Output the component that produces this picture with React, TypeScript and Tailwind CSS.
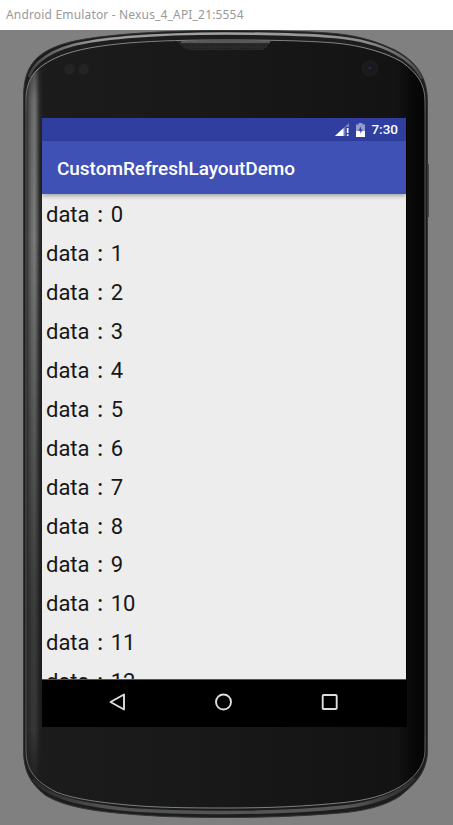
import React from "react";

const rows = Array.from({ length: 13 }, (_, i) => i);

const OUTER =
  "M23.5 98C23.5 78 28 67 37 58C54 43 78 38.5 128 34C160 31.5 190 30.5 225 30.5C265 30.5 305 31 335 33.5C362 36 380 43 395 50C415 61 427.5 75 427.5 102V750C427.5 772 415 784 400 796C388 804 371 810 344 812.7C304 816 270 817.5 225 817.5C185 817.5 155 816.5 128 814C90 811 63 806 45 795C30 783 23.5 771 23.5 750Z";
const INNER =
  "M26 100C26 86 30 77 37 70C54 55 78 47.5 128 43C145 41.5 160 41 176 41L182 46Q185 50 190 50H261Q266 50 269 44L272 41C297 41 317 41.5 335 43C362 45.5 387 53 402 62C418 74 425 84 425 102V750C425 766 414 778 400 786.7C386 795 369 800 344 802.5C304 806.5 270 808 225 808C185 808 155 807.5 128 805C95 802 70 798 55 791.5C35 781 26 770 26 750Z";
const RIM =
  "M26 100C26 86 30 77 37 70C54 55 78 47.5 128 43C160 40.5 190 40 225 40C265 40 305 40.5 335 43C362 45.5 387 53 402 62C418 74 425 84 425 102V750C425 766 414 778 400 786.7C386 795 369 800 344 802.5C304 806.5 270 808 225 808C185 808 155 807.5 128 805C95 802 70 798 55 791.5C35 781 26 770 26 750Z";

function DeviceFrame() {
  return (
    <svg
      className="absolute left-0 top-[-30px] h-[825px] w-[453px]"
      viewBox="0 0 453 825"
      fill="none"
      aria-hidden="true"
    >
      <defs>
        <linearGradient id="face" gradientUnits="userSpaceOnUse" x1="26" y1="0" x2="425" y2="0">
          <stop offset="0" stopColor="#1c1c1c" />
          <stop offset="0.5" stopColor="#181818" />
          <stop offset="0.93" stopColor="#131313" />
          <stop offset="0.97" stopColor="#080808" />
          <stop offset="1" stopColor="#050505" />
        </linearGradient>
        <linearGradient id="side" gradientUnits="userSpaceOnUse" x1="26" y1="0" x2="43" y2="0">
          <stop offset="0" stopColor="#202020" />
          <stop offset="0.12" stopColor="#484848" />
          <stop offset="0.3" stopColor="#686868" />
          <stop offset="0.5" stopColor="#7a7c7a" />
          <stop offset="0.65" stopColor="#5a5a5a" />
          <stop offset="0.78" stopColor="#303030" />
          <stop offset="1" stopColor="#202020" stopOpacity="0.4" />
        </linearGradient>
        <linearGradient id="fade" gradientUnits="userSpaceOnUse" x1="0" y1="55" x2="0" y2="790">
          <stop offset="0" stopColor="#fff" stopOpacity="0.35" />
          <stop offset="0.06" stopColor="#fff" stopOpacity="0.9" />
          <stop offset="0.25" stopColor="#fff" />
          <stop offset="0.5" stopColor="#fff" stopOpacity="0.65" />
          <stop offset="0.75" stopColor="#fff" stopOpacity="0.35" />
          <stop offset="0.92" stopColor="#fff" stopOpacity="0.28" />
          <stop offset="1" stopColor="#fff" stopOpacity="0" />
        </linearGradient>
        <linearGradient id="metal" gradientUnits="userSpaceOnUse" x1="23" y1="0" x2="428" y2="0">
          <stop offset="0" stopColor="#333" />
          <stop offset="0.06" stopColor="#606060" />
          <stop offset="0.18" stopColor="#989898" />
          <stop offset="0.5" stopColor="#a4a4a4" />
          <stop offset="0.85" stopColor="#8c8c8c" />
          <stop offset="0.95" stopColor="#606060" />
          <stop offset="1" stopColor="#333" />
        </linearGradient>
        <linearGradient id="lower" gradientUnits="userSpaceOnUse" x1="23" y1="0" x2="428" y2="0">
          <stop offset="0" stopColor="#222" />
          <stop offset="0.2" stopColor="#505353" />
          <stop offset="0.8" stopColor="#555858" />
          <stop offset="1" stopColor="#222" />
        </linearGradient>
        <linearGradient id="rim" gradientUnits="userSpaceOnUse" x1="0" y1="40" x2="0" y2="808">
          <stop offset="0" stopColor="#808080" />
          <stop offset="0.04" stopColor="#909090" />
          <stop offset="0.1" stopColor="#585858" />
          <stop offset="0.9" stopColor="#585858" />
          <stop offset="1" stopColor="#808080" />
        </linearGradient>
        <mask id="sideMask">
          <rect x="20" y="50" width="30" height="750" fill="url(#fade)" />
        </mask>
        <clipPath id="innerClip">
          <path d={INNER} />
        </clipPath>
        <pattern id="mesh" width="3" height="3" patternUnits="userSpaceOnUse">
          <rect width="3" height="3" fill="#292929" />
          <rect width="1" height="1" fill="#191919" />
        </pattern>
      </defs>

      <path d={OUTER} fill="#1d1d1d" />
      <path d={OUTER} stroke="#343434" strokeWidth="1" />
      {/* polished band around the top shoulder */}
      <path
        d="M29 77C32 69 35 65 40 61C57 46.5 80 41.5 128 37C160 34.5 190 33.5 225 33.5C265 33.5 305 34.5 335 37C362 39.5 380 45 395 53C410 61 418 70 422 79"
        stroke="url(#metal)"
        strokeWidth="2.6"
      />
      {/* lower shoulder */}
      <path
        d="M33 779C46 796 75 804 128 809.5C155 811.5 185 812.5 225 812.5C270 812.5 304 811 344 807C380 803 401 793 415 778"
        stroke="url(#lower)"
        strokeWidth="3.4"
      />
      <path d={RIM} fill="url(#mesh)" />
      <path d={INNER} fill="url(#face)" />
      <g clipPath="url(#innerClip)">
        <rect x="26" y="50" width="17" height="750" fill="url(#side)" mask="url(#sideMask)" />
      </g>
      <path d={RIM} stroke="url(#rim)" strokeWidth="1" />
      <path d="M181 42H270" stroke="#585858" strokeWidth="2" />
      <path d="M428.4 164V217" stroke="#444" strokeWidth="1.2" />
      <circle cx="69.5" cy="69" r="5.5" fill="#232323" />
      <circle cx="83.5" cy="69" r="5.5" fill="#232323" />
      <circle cx="370" cy="68.5" r="8.5" fill="#1b1b1d" />
      <circle cx="370" cy="68.5" r="4.5" fill="#181820" />
      <circle cx="370" cy="68" r="1.5" fill="#26264a" />
    </svg>
  );
}

function SignalIcon() {
  return (
    <svg className="h-[14px] w-[14px]" viewBox="0 0 14 14" aria-hidden="true">
      <path d="M0 13L14 0V4H10.5V13Z" fill="#7781c2" />
      <path d="M0 13L8.5 5V13Z" fill="#fff" />
      <path d="M11.8 5h1.7v5h-1.7zM11.8 11.3h1.7V13h-1.7z" fill="#fff" />
    </svg>
  );
}

function BatteryIcon() {
  return (
    <svg className="h-[14px] w-[9px]" viewBox="0 0 9 14" aria-hidden="true">
      <path d="M2.5 0h4v1.5H9V14H0V1.5h2.5z" fill="#929acf" />
      <path d="M0 8h9v6H0z" fill="#fff" />
      <path d="M5 3.5L2.4 7.8H4.3V10.6L6.8 6.5H5z" fill="#303f9f" />
    </svg>
  );
}

export default function App() {
  return (
    <div className="flex h-[825px] w-[453px] flex-col overflow-hidden bg-[#808080]">
      <header className="flex h-[30px] shrink-0 items-center bg-white pl-[6px] font-['Noto_Sans',sans-serif] text-[12px] tracking-[0.17px] text-[#999]">
        <span className="whitespace-nowrap">Android Emulator - Nexus_4_API_21:5554</span>
      </header>
      <div className="relative grow pl-[42px] pt-[88px] font-[Roboto,sans-serif]">
        <DeviceFrame />
        <main className="relative flex h-[609px] w-[365px] flex-col bg-black pr-px">
          <div className="flex h-[23px] shrink-0 items-center justify-end bg-[#303f9f] pr-[8px] text-white">
            <SignalIcon />
            <span className="ml-[7px] flex">
              <BatteryIcon />
            </span>
            <span className="ml-[6px] text-[13.5px] font-medium leading-none">7:30</span>
          </div>
          <div className="z-10 flex h-[53px] shrink-0 items-center bg-[#3f51b5] pl-[15px] pt-[3px] text-[19px] font-medium tracking-[-0.05px] text-white shadow-[0_2px_4px_rgba(0,0,0,0.3)]">
            <h1>CustomRefreshLayoutDemo</h1>
          </div>
          <ul className="min-h-0 grow overflow-hidden border-b border-[#555] bg-[#ededed] pt-[2.4px] text-[22px] text-[#171717] [word-spacing:2.2px]">
            {rows.map((n) => (
              <li key={n} className="h-[38.9px] whitespace-pre pl-[4px] leading-[38.9px]">
                data <span className="font-medium">:</span> {n}
              </li>
            ))}
          </ul>
          <nav className="flex h-[47px] shrink-0 items-center justify-between bg-black pb-[4px] pl-[66px] pr-[67px] text-[#dedede]">
            <svg className="h-[18px] w-[18px]" viewBox="0 0 18 18" fill="none" aria-label="Back">
              <path d="M16 1.5V16.5L2.5 9Z" stroke="currentColor" strokeWidth="1.9" strokeLinejoin="round" />
            </svg>
            <svg className="h-[18px] w-[18px]" viewBox="0 0 18 18" fill="none" aria-label="Home">
              <circle cx="8.5" cy="9" r="7.5" stroke="currentColor" strokeWidth="1.9" />
            </svg>
            <svg className="h-[18px] w-[18px]" viewBox="0 0 18 18" fill="none" aria-label="Recent apps">
              <rect x="1.7" y="2" width="14" height="14" rx="1" stroke="currentColor" strokeWidth="1.9" />
            </svg>
          </nav>
        </main>
      </div>
    </div>
  );
}
